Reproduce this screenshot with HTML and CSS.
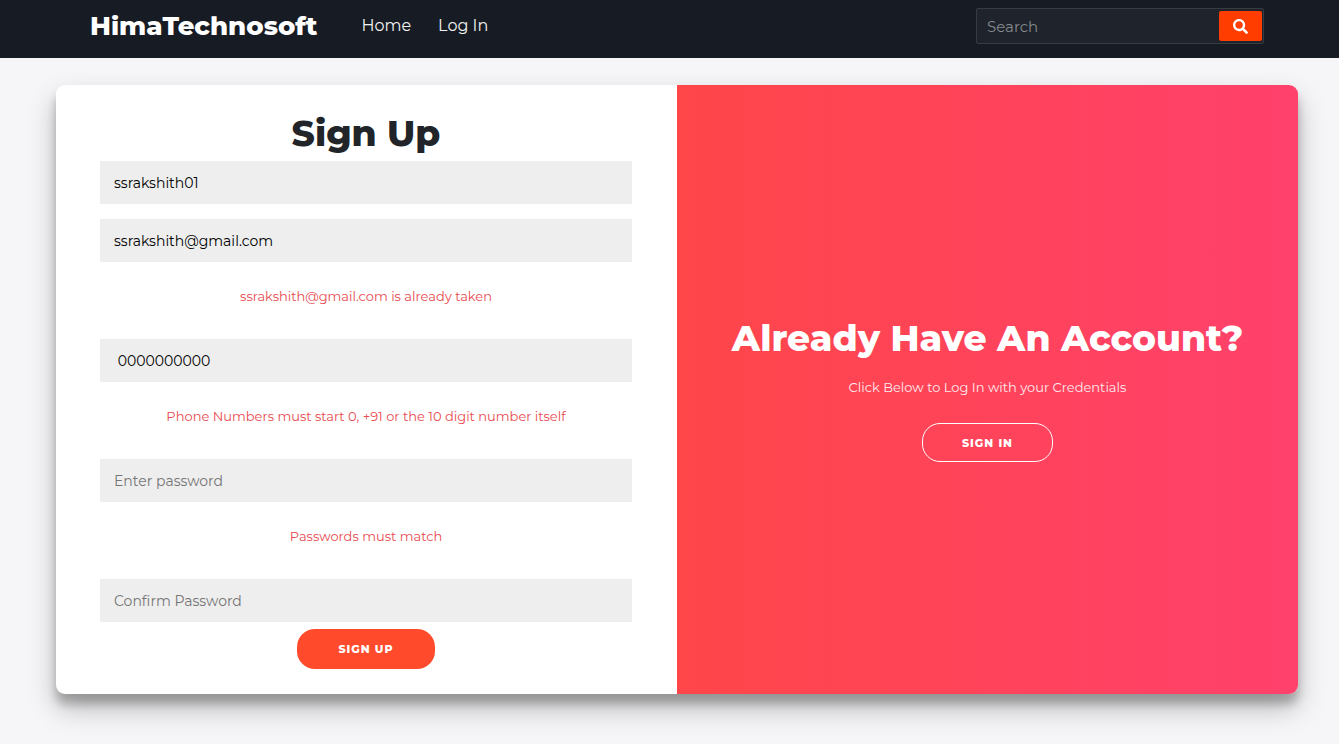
FILE: index.html
```html
<!DOCTYPE html>
<html lang="en">
<head>
<meta charset="utf-8">
<meta name="viewport" content="width=device-width, initial-scale=1">
<title>HimaTechnosoft</title>
<link rel="stylesheet" href="styles.css">
</head>
<body>
<header class="navbar">
  <a class="logo" href="#">HimaTechnosoft</a>
  <nav class="nav-links">
    <a href="#">Home</a>
    <a href="#">Log In</a>
  </nav>
  <form class="search">
    <input class="search-input" type="search" placeholder="Search" aria-label="Search">
    <button class="search-button" type="button" aria-label="Submit search">
      <svg viewBox="0 0 512 512" width="15" height="15" aria-hidden="true"><path fill="currentColor" d="M505 442.700 405.300 343c-4.500-4.500-10.600-7-17-7H372c27.600-35.300 44-79.700 44-128C416 93.100 322.900 0 208 0S0 93.100 0 208s93.100 208 208 208c48.300 0 92.700-16.400 128-44v16.300c0 6.400 2.500 12.500 7 17l99.700 99.700c9.400 9.400 24.600 9.400 33.900 0l28.300-28.300c9.400-9.400 9.400-24.600.1-34zM208 336c-70.700 0-128-57.200-128-128 0-70.700 57.200-128 128-128 70.700 0 128 57.200 128 128 0 70.700-57.200 128-128 128z"/></svg>
    </button>
  </form>
</header>
<main class="card">
  <form class="signup">
    <h1 class="title">Sign Up</h1>
    <input class="field" type="text" value="ssrakshith01" aria-label="Username">
    <input class="field" type="text" value="ssrakshith@gmail.com" aria-label="Email">
    <p class="error">ssrakshith@gmail.com is already taken</p>
    <input class="field" type="text" value=" 0000000000" aria-label="Phone number">
    <p class="error">Phone Numbers must start 0, +91 or the 10 digit number itself</p>
    <input class="field" type="password" placeholder="Enter password" aria-label="Password">
    <p class="error">Passwords must match</p>
    <input class="field" type="password" placeholder="Confirm Password" aria-label="Confirm password">
    <button class="button" type="button">Sign Up</button>
  </form>
  <section class="signin">
    <h2 class="title">Already Have An Account?</h2>
    <p class="hint">Click Below to Log In with your Credentials</p>
    <button class="button button-ghost" type="button">Sign In</button>
  </section>
</main>
</body>
</html>
```
FILE: styles.css
```css
* {
  box-sizing: border-box;
}

body {
  margin: 0;
  background: #f6f5f7;
  font-family: Montserrat, Inter, sans-serif;
  color: #212529;
}

input,
button {
  font-family: inherit;
}

.navbar {
  display: flex;
  align-items: center;
  padding: 8px 75px 14px 90px;
  background: #171c24;
}

.logo {
  color: #fff;
  font-size: 26px;
  font-weight: 800;
  line-height: 36px;
  text-decoration: none;
}

.nav-links {
  display: flex;
  gap: 27px;
  margin-left: 44px;
}

.nav-links a {
  color: #f2f2f2;
  font-size: 16px;
  line-height: 36px;
  text-decoration: none;
}

.search {
  display: flex;
  width: 288px;
  height: 36px;
  margin-left: auto;
  padding: 2px 1px;
  border: 1px solid #373b42;
  border-radius: 2px;
  background: #1f232b;
}

.search-input {
  flex: 1;
  min-width: 0;
  padding: 0 9px;
  border: 0;
  background: transparent;
  color: #fff;
  font-size: 15px;
}

.search-input::placeholder {
  color: #868a90;
}

.search-button {
  display: flex;
  align-items: center;
  justify-content: center;
  width: 43px;
  padding: 0;
  border: 0;
  border-radius: 2px;
  background: #ff3d00;
  color: #fff;
}

.card {
  display: grid;
  grid-template-columns: 1fr 1fr;
  margin: 27px 41px 50px 56px;
  overflow: hidden;
  border-radius: 9px;
  background: #fff;
  box-shadow: 0 14px 28px rgba(0, 0, 0, 0.25), 0 10px 10px rgba(0, 0, 0, 0.22);
}

.signup,
.signin {
  display: flex;
  flex-direction: column;
  align-items: center;
  text-align: center;
}

.signup {
  padding: 27px 45px 25px 44px;
}

.signin {
  justify-content: center;
  background: linear-gradient(to right, #ff4649, #ff416c);
  color: #fff;
}

.title {
  margin: 0;
  font-size: 36px;
  font-weight: 800;
  line-height: 43px;
}

.signup .title {
  margin-bottom: 6px;
}

.field {
  width: 100%;
  height: 43px;
  padding: 0 14px;
  border: 0;
  border-radius: 0;
  background: #eee;
  color: #000;
  font-size: 14px;
}

.field::placeholder {
  color: #757575;
}

.field + .field {
  margin-top: 15px;
}

.error,
.hint {
  font-size: 13px;
  line-height: 20px;
}

.error {
  margin: 24px 0 33px;
  color: #e84a4f;
}

.hint {
  margin: 17px 0 26px;
  color: #ffe9ec;
}

.button {
  height: 40px;
  padding: 0 41px;
  border: 0;
  border-radius: 18px;
  background: #ff4b2b;
  color: #fff;
  font-size: 11px;
  font-weight: 800;
  letter-spacing: 1px;
  text-transform: uppercase;
}

.signup .button {
  margin-top: 7px;
}

.button-ghost {
  height: 39px;
  padding: 0 39px;
  border: 1px solid #fff;
  background: transparent;
}
```
